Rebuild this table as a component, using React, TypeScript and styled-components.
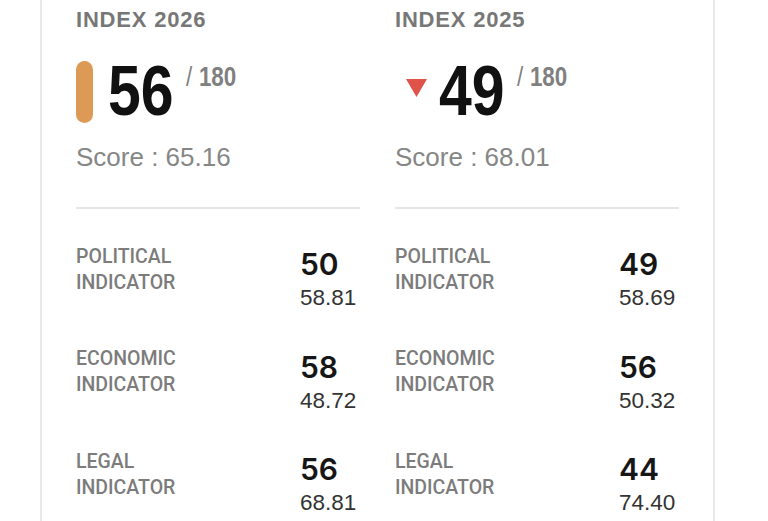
import React from "react";
import styled, { createGlobalStyle } from "styled-components";

const GlobalStyle = createGlobalStyle`
  html, body {
    margin: 0;
    padding: 0;
    background: #ffffff;
    overflow: hidden;
  }
  body {
    font-family: "Liberation Sans", Arial, sans-serif;
  }
`;

const Page = styled.div`
  width: 768px;
  height: 521px;
  overflow: hidden;
  background: #ffffff;
`;

const Card = styled.div`
  margin-left: 40px;
  width: 603px;
  min-height: 560px;
  padding: 7px 34px 0;
  border-left: 2px solid #e8e8e8;
  border-right: 2px solid #e8e8e8;
  display: grid;
  grid-template-columns: 284px 284px;
  column-gap: 35px;
  align-items: start;
`;

const Column = styled.section`
  display: flex;
  flex-direction: column;
`;

const Title = styled.h2`
  margin: 0;
  font-family: "Liberation Sans", Arial, sans-serif;
  font-weight: 700;
  font-size: 22px;
  line-height: 26px;
  letter-spacing: 0.8px;
  color: #777777;
`;

const RankRow = styled.div`
  display: flex;
  align-items: flex-start;
  margin-top: 22px;
`;

const Pill = styled.span`
  display: block;
  flex: none;
  width: 17px;
  height: 62px;
  margin-top: 6px;
  margin-right: 15px;
  border-radius: 9px;
  background: #dc9a56;
`;

const TriangleWrap = styled.span`
  display: block;
  flex: none;
  width: 21px;
  height: 18px;
  margin-top: 24px;
  margin-left: 11px;
  margin-right: 12px;
  svg {
    display: block;
  }
`;

const Condensed = styled.div`
  display: flex;
  align-items: flex-start;
  transform: scaleX(0.83);
  transform-origin: left top;
  white-space: nowrap;
`;

const Rank = styled.span`
  font-family: "Liberation Sans", Arial, sans-serif;
  font-weight: 700;
  font-size: 71px;
  line-height: 71px;
  color: #111111;
`;

const OutOf = styled.span`
  margin-top: 8.5px;
  margin-left: 15px;
  font-family: "Liberation Sans", Arial, sans-serif;
  font-weight: 700;
  font-size: 27px;
  line-height: 27px;
  color: #808080;
`;

const Slash = styled.span`
  font-weight: 400;
  margin-right: 8px;
`;

const Score = styled.div`
  margin-top: 16px;
  font-family: "Liberation Sans", Arial, sans-serif;
  font-size: 26px;
  line-height: 30px;
  color: #868686;
`;

const Divider = styled.hr`
  margin: 35px 0 0;
  border: 0;
  height: 2px;
  background: #e6e6e6;
`;

const Indicators = styled.div`
  display: flex;
  flex-direction: column;
  gap: 35.1px;
  margin-top: 34.5px;
`;

const IndicatorRow = styled.div`
  display: grid;
  grid-template-columns: 224px 1fr;
  align-items: start;
`;

const IndicatorLabel = styled.div`
  font-family: Roboto, "Liberation Sans", sans-serif;
  font-weight: 500;
  font-size: 19.5px;
  line-height: 26px;
  color: #7c7c7c;
`;

const ValueBlock = styled.div`
  display: flex;
  flex-direction: column;
  margin-top: 4.6px;
`;

const ValueRank = styled.span`
  font-family: Inter, "Liberation Sans", sans-serif;
  font-weight: 600;
  font-size: 30px;
  line-height: 32px;
  color: #161616;
`;

const ValueScore = styled.span`
  margin-top: 5px;
  font-family: "Liberation Sans", Arial, sans-serif;
  font-size: 22.5px;
  line-height: 26px;
  color: #333333;
`;

type Indicator = { name: string; rank: number; score: string };
type IndexData = {
  year: number;
  rank: number;
  score: string;
  marker: "pill" | "down";
  indicators: Indicator[];
};

const data: IndexData[] = [
  {
    year: 2026,
    rank: 56,
    score: "65.16",
    marker: "pill",
    indicators: [
      { name: "POLITICAL", rank: 50, score: "58.81" },
      { name: "ECONOMIC", rank: 58, score: "48.72" },
      { name: "LEGAL", rank: 56, score: "68.81" },
    ],
  },
  {
    year: 2025,
    rank: 49,
    score: "68.01",
    marker: "down",
    indicators: [
      { name: "POLITICAL", rank: 49, score: "58.69" },
      { name: "ECONOMIC", rank: 56, score: "50.32" },
      { name: "LEGAL", rank: 44, score: "74.40" },
    ],
  },
];

const DownTriangle = () => (
  <TriangleWrap>
    <svg width="21" height="18" viewBox="0 0 21 18">
      <polygon points="0,0 21,0 10.5,18" fill="#e0534a" />
    </svg>
  </TriangleWrap>
);

export default function App() {
  return (
    <Page>
      <GlobalStyle />
      <Card>
        {data.map((col) => (
          <Column key={col.year}>
            <Title>INDEX {col.year}</Title>
            <RankRow>
              {col.marker === "pill" ? <Pill /> : <DownTriangle />}
              <Condensed>
                <Rank>{col.rank}</Rank>
                <OutOf>
                  <Slash>/</Slash>180
                </OutOf>
              </Condensed>
            </RankRow>
            <Score>Score : {col.score}</Score>
            <Divider />
            <Indicators>
              {col.indicators.map((ind) => (
                <IndicatorRow key={ind.name}>
                  <IndicatorLabel>
                    {ind.name}
                    <br />
                    INDICATOR
                  </IndicatorLabel>
                  <ValueBlock>
                    <ValueRank>{ind.rank}</ValueRank>
                    <ValueScore>{ind.score}</ValueScore>
                  </ValueBlock>
                </IndicatorRow>
              ))}
            </Indicators>
          </Column>
        ))}
      </Card>
    </Page>
  );
}
